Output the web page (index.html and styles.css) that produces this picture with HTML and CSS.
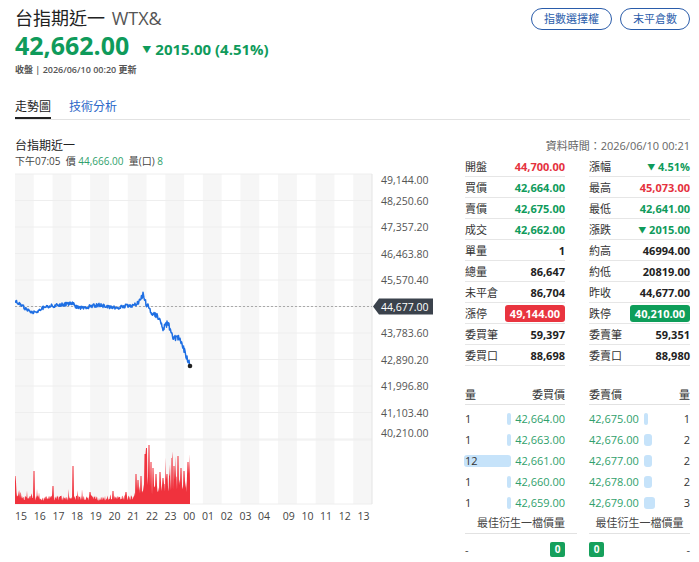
FILE: index.html
```html
<!DOCTYPE html>
<html lang="zh-Hant">
<head>
  <meta charset="UTF-8" />
  <meta name="viewport" content="width=device-width, initial-scale=1" />
  <title>台指期近一 WTX&amp;</title>
  <link rel="stylesheet" href="styles.css">
</head>
<body>
  <div class="page">
    <header class="quote-head">
      <div class="quote-main">
        <h1 class="quote-name">台指期近一 <span class="sym">WTX&amp;</span></h1>
        <div class="price-row">
          <span class="price fall">42,662.00</span>
          <span class="change fall"><span class="arrow">▼</span>2015.00 (4.51%)</span>
        </div>
        <div class="updated">收盤 | 2026/06/10 00:20 更新</div>
      </div>
      <div class="quote-links">
        <a href="#">指數選擇權</a>
        <a href="#">末平倉數</a>
      </div>
    </header>

    <nav class="tabs">
      <a class="tab active" href="#">走勢圖</a>
      <a class="tab" href="#">技術分析</a>
    </nav>

    <section class="board">
      <div class="chart-col">
        <div class="chart-title">台指期近一</div>
        <div class="chart-info">下午07:05 &nbsp;價 <span class="fall-lt">44,666.00</span> &nbsp;量(口) <span class="fall-lt">8</span></div>
        <svg id="chart" class="chart" width="445" height="355" viewBox="15 172 445 355"></svg>
      </div>

      <div class="stats-col">
        <div class="data-time">資料時間：2026/06/10 00:21</div>

        <div class="stats">
          <div class="stat"><span>開盤</span><b class="rise">44,700.00</b></div>
          <div class="stat"><span>漲幅</span><b class="fall"><small>▼</small> 4.51%</b></div>
          <div class="stat"><span>買價</span><b class="fall">42,664.00</b></div>
          <div class="stat"><span>最高</span><b class="rise">45,073.00</b></div>
          <div class="stat"><span>賣價</span><b class="fall">42,675.00</b></div>
          <div class="stat"><span>最低</span><b class="fall">42,641.00</b></div>
          <div class="stat"><span>成交</span><b class="fall">42,662.00</b></div>
          <div class="stat"><span>漲跌</span><b class="fall"><small>▼</small> 2015.00</b></div>
          <div class="stat"><span>單量</span><b>1</b></div>
          <div class="stat"><span>約高</span><b>46994.00</b></div>
          <div class="stat"><span>總量</span><b>86,647</b></div>
          <div class="stat"><span>約低</span><b>20819.00</b></div>
          <div class="stat"><span>未平倉</span><b>86,704</b></div>
          <div class="stat"><span>昨收</span><b>44,677.00</b></div>
          <div class="stat"><span>漲停</span><b class="badge badge-rise">49,144.00</b></div>
          <div class="stat"><span>跌停</span><b class="badge badge-fall">40,210.00</b></div>
          <div class="stat"><span>委買筆</span><b>59,397</b></div>
          <div class="stat"><span>委賣筆</span><b>59,351</b></div>
          <div class="stat"><span>委買口</span><b>88,698</b></div>
          <div class="stat"><span>委賣口</span><b>88,980</b></div>
        </div>

        <div class="book">
          <div class="book-row book-head">
            <div class="side"><span>量</span><span>委買價</span></div>
            <div class="side"><span>委賣價</span><span>量</span></div>
          </div>
          <div class="book-row">
            <div class="bid"><div class="depth"><i class="bar" style="width:3.9px"></i><span>1</span></div><span class="px">42,664.00</span></div>
            <div class="ask"><span class="px">42,675.00</span><div class="depth"><i class="bar" style="width:3.9px"></i><span>1</span></div></div>
          </div>
          <div class="book-row">
            <div class="bid"><div class="depth"><i class="bar" style="width:3.9px"></i><span>1</span></div><span class="px">42,663.00</span></div>
            <div class="ask"><span class="px">42,676.00</span><div class="depth"><i class="bar" style="width:7.8px"></i><span>2</span></div></div>
          </div>
          <div class="book-row">
            <div class="bid"><div class="depth"><i class="bar" style="width:47px"></i><span>12</span></div><span class="px">42,661.00</span></div>
            <div class="ask"><span class="px">42,677.00</span><div class="depth"><i class="bar" style="width:7.8px"></i><span>2</span></div></div>
          </div>
          <div class="book-row">
            <div class="bid"><div class="depth"><i class="bar" style="width:3.9px"></i><span>1</span></div><span class="px">42,660.00</span></div>
            <div class="ask"><span class="px">42,678.00</span><div class="depth"><i class="bar" style="width:7.8px"></i><span>2</span></div></div>
          </div>
          <div class="book-row">
            <div class="bid"><div class="depth"><i class="bar" style="width:3.9px"></i><span>1</span></div><span class="px">42,659.00</span></div>
            <div class="ask"><span class="px">42,679.00</span><div class="depth"><i class="bar" style="width:11.7px"></i><span>3</span></div></div>
          </div>

          <div class="best-label">
            <div>最佳衍生一檔價量</div>
            <div>最佳衍生一檔價量</div>
          </div>
          <div class="book-row best-row">
            <div class="side"><span>-</span><span class="zero">0</span></div>
            <div class="side"><span class="zero">0</span><span>-</span></div>
          </div>
        </div>
      </div>
    </section>
  </div>

  <script src="chart.js"></script>
</body>
</html>
```

FILE: styles.css
```css
body {
  margin: 0;
  font-family: "Open Sans", "Noto Sans CJK TC", sans-serif;
  background: #fff;
  color: #333;
}
a {
  text-decoration: none;
}
.page {
  padding: 7px 9px 0 15px;
}

/* --- QUOTE HEADER --- */
.quote-head {
  display: flex;
  justify-content: space-between;
  align-items: flex-start;
}
.quote-name {
  margin: 0;
  font-size: 18px;
  font-weight: normal;
  line-height: 22px;
  color: #222;
}
.quote-name .sym {
  color: #555;
  margin-left: 2px;
}
.price-row {
  display: flex;
  align-items: baseline;
  gap: 13px;
  line-height: 26px;
  margin-top: 3px;
}
.price {
  font-size: 25px;
  font-weight: 700;
}
.change {
  font-size: 15px;
  font-weight: 700;
}
.change .arrow {
  font-size: 9px;
  vertical-align: 2px;
  margin-right: 4px;
}
.updated {
  font-size: 9px;
  line-height: 14px;
  color: #555;
  font-weight: 600;
}
.quote-links {
  display: flex;
  gap: 8px;
  padding-top: 1px;
}
.quote-links a {
  height: 20px;
  line-height: 20px;
  padding: 0 12px;
  border: 1px solid #2a5caa;
  border-radius: 12px;
  font-size: 11px;
  color: #2a5caa;
}

/* --- TABS --- */
.tabs {
  display: flex;
  gap: 18px;
  margin-top: 21px;
  border-bottom: 1px solid #e2e2e2;
}
.tab {
  font-size: 12px;
  line-height: 18px;
  padding-bottom: 1px;
  border-bottom: 2px solid transparent;
  color: #2a66c8;
}
.tab.active {
  color: #222;
  border-bottom-color: #222;
}

/* --- BOARD --- */
.board {
  display: flex;
  gap: 5px;
  margin-top: 19px;
}
.chart-col {
  width: 445px;
  display: flex;
  flex-direction: column;
}
.chart-title {
  font-size: 12px;
  line-height: 14px;
  color: #222;
}
.chart-info {
  font-size: 10px;
  line-height: 12px;
  margin-top: 2px;
  color: #444;
}
.chart {
  display: block;
  margin-top: 3px;
}
.fall-lt {
  color: #2f9f6c;
}

/* chart svg parts */
.stripe { fill: #f6f6f6; }
.grid { stroke: #eeeeee; stroke-width: 1; }
.axis { stroke: #e4e4e4; stroke-width: 1; }
.ref-line { stroke: #a9a9a9; stroke-width: 1; stroke-dasharray: 2 2; }
.price-line { fill: none; stroke: #1f6fe3; stroke-width: 1.5; stroke-linejoin: round; }
.last-dot { fill: #222; }
.volume { fill: #f0323d; }
.axis-label { font-size: 10.5px; fill: #555; }
.x-label { font-size: 10.5px; fill: #444; }
.ref-badge { fill: #3b424c; }
.ref-text { font-size: 10.5px; fill: #fff; }

/* --- STATS --- */
.stats-col {
  width: 225px;
}
.data-time {
  font-size: 11px;
  line-height: 14px;
  color: #666;
  text-align: right;
}
.stats {
  display: grid;
  grid-template-columns: 100px 1fr;
  column-gap: 24px;
  margin-top: 3px;
}
.stat {
  display: flex;
  justify-content: space-between;
  align-items: center;
  height: 20px;
  border-bottom: 1px solid #e6e6e6;
  font-size: 11px;
}
.stat span {
  color: #333;
}
.stat b {
  font-weight: 700;
  color: #222;
}
.stat small {
  font-size: 8px;
  vertical-align: 1px;
}
.rise { color: #e5323e !important; }
.fall { color: #0f9b5b !important; }
.badge {
  height: 17px;
  line-height: 17px;
  width: 60px;
  text-align: center;
  border-radius: 3px;
  color: #fff !important;
}
.badge-rise { background: #e9343f; }
.badge-fall { background: #0e9e5a; }

/* --- ORDER BOOK --- */
.book {
  margin-top: 18px;
  font-size: 11px;
}
.book-row {
  display: grid;
  grid-template-columns: 100px 1fr;
  column-gap: 24px;
  height: 21px;
  align-items: center;
}
.book-head {
  height: 20px;
  margin-bottom: 4px;
}
.side {
  display: flex;
  justify-content: space-between;
  align-items: center;
}
.book-head .side {
  height: 20px;
  border-bottom: 1px solid #e2e2e2;
  color: #333;
}
.bid, .ask {
  display: flex;
  align-items: center;
}
.depth {
  position: relative;
  flex: 1;
  height: 12px;
  line-height: 12px;
  color: #333;
}
.bid .depth { margin-right: 4px; }
.ask .depth { margin-left: 5px; text-align: right; }
.depth .bar {
  position: absolute;
  top: 0;
  height: 12px;
  border-radius: 3px;
  background: #c6e3fa;
}
.bid .bar { right: 0; }
.ask .bar { left: 0; }
.depth span {
  position: relative;
}
.px {
  color: #2f9f6c;
}
.best-label {
  display: grid;
  grid-template-columns: 112px 1fr;
  column-gap: 12px;
}
.best-label div {
  text-align: center;
  line-height: 20px;
  border-bottom: 1px solid #e2e2e2;
  color: #444;
}
.best-row {
  height: 24px;
  margin-top: 3px;
  color: #444;
}
.zero {
  width: 15px;
  height: 15px;
  line-height: 15px;
  text-align: center;
  border-radius: 2px;
  background: #16a05c;
  color: #fff;
  font-weight: 700;
  font-size: 10px;
}
```

FILE: chart.js
```js
(function () {
  const svg = document.getElementById('chart');
  const NS = 'http://www.w3.org/2000/svg';

  function add(tag, attrs, text) {
    const el = document.createElementNS(NS, tag);
    for (const k in attrs) el.setAttribute(k, attrs[k]);
    if (text) el.textContent = text;
    svg.appendChild(el);
    return el;
  }

  // small seeded random so the picture is the same each load
  let seed = 20260610;
  function rnd() {
    seed |= 0; seed = seed + 0x6D2B79F5 | 0;
    let t = Math.imul(seed ^ seed >>> 15, 1 | seed);
    t = t + Math.imul(t ^ t >>> 7, 61 | t) ^ t;
    return ((t ^ t >>> 14) >>> 0) / 4294967296;
  }

  function interp(points, x) {
    for (let i = 1; i < points.length; i++) {
      const [x0, y0] = points[i - 1];
      const [x1, y1] = points[i];
      if (x <= x1) return y0 + (y1 - y0) * (x - x0) / (x1 - x0);
    }
    return points[points.length - 1][1];
  }

  const left = 15, right = 372;
  const colW = (right - left) / 19;
  const chartTop = 176, step = 26.5;
  const volTop = 442, volBottom = 506;

  // hour stripes
  for (let i = 0; i < 19; i += 2) {
    add('rect', { x: left + i * colW, y: chartTop, width: colW, height: volBottom - chartTop, class: 'stripe' });
  }

  // price grid + labels
  const levels = ['49,144.00', '48,250.60', '47,357.20', '46,463.80', '45,570.40', '44,677.00',
    '43,783.60', '42,890.20', '41,996.80', '41,103.40', '40,210.00'];
  levels.forEach((lv, i) => {
    const y = chartTop + i * step;
    add('line', { x1: left, x2: right, y1: y, y2: y, class: 'grid' });
    if (i === 5) return;
    const ly = Math.min(Math.max(y, 182), 435);
    add('text', { x: 381, y: ly + 4, class: 'axis-label' }, lv);
  });
  add('line', { x1: left, x2: right, y1: volTop, y2: volTop, class: 'grid' });
  add('line', { x1: left, x2: right, y1: volBottom, y2: volBottom, class: 'grid' });
  add('line', { x1: right, x2: right, y1: chartTop, y2: volBottom, class: 'axis' });

  // previous close reference
  const refY = chartTop + 5 * step;
  add('line', { x1: left, x2: right, y1: refY, y2: refY, class: 'ref-line' });

  // volume
  const spikes = [[15, 28], [15.5, 22], [34, 33], [53, 18], [73, 38], [90, 12], [113, 13], [126, 12],
    [136, 30], [138, 24], [141, 28], [145, 50], [146.5, 56], [149, 59], [151, 42], [153, 36], [156, 30],
    [160, 32], [163, 26], [167, 30], [172, 46], [174, 38], [178, 48], [181, 36], [184, 33], [188, 42]];
  let vol = `M${left},${volBottom}`;
  for (let x = left; x <= 190; x += 0.5) {
    const base = x < 136 ? 6 + (x < 24 ? (24 - x) * 0.8 : 0) : 15 + (x > 165 ? 6 : 0);
    let h = base * (0.55 + rnd() * 0.9);
    if (rnd() < 0.08) h += base * rnd() * 1.6;
    spikes.forEach(([sx, sh]) => { if (Math.abs(x - sx) < 0.6) h = Math.max(h, sh); });
    vol += ` L${x},${(volBottom - h).toFixed(1)}`;
  }
  vol += ` L190,${volBottom} Z`;
  add('path', { d: vol, class: 'volume' });

  // price line
  const anchors = [[15, 303], [20, 306], [26, 311], [31, 313], [35, 315], [40, 311], [50, 308], [60, 307],
    [72, 305], [76, 309], [83, 310], [92, 308], [100, 307], [108, 309], [117, 310], [125, 308], [133, 308],
    [138, 305], [141, 301], [143, 297], [146, 305], [150, 312], [154, 316], [157, 318], [160, 322],
    [163, 330], [166, 327], [168, 325], [171, 333], [173, 343], [176, 339], [180, 340], [183, 348],
    [185, 355], [188, 362], [190, 368]];
  let d = '';
  for (let x = left; x <= 190; x += 0.5) {
    const amp = x < 140 ? 3.6 : 6;
    let y = interp(anchors, x) + (rnd() - 0.5) * amp;
    if (x >= 190) y = 368;
    d += (d ? ' L' : 'M') + x + ',' + y.toFixed(1);
  }
  add('path', { d, class: 'price-line' });
  add('circle', { cx: 190, cy: 368, r: 2.3, class: 'last-dot' });

  // reference badge on the axis
  add('path', { d: `M373,${refY} L379,${refY - 8} H433 V${refY + 8} H379 Z`, class: 'ref-badge' });
  add('text', { x: 381, y: refY + 4, class: 'ref-text' }, '44,677.00');

  // hour labels
  const hours = ['15', '16', '17', '18', '19', '20', '21', '22', '23', '00', '01', '02', '03', '04',
    '09', '10', '11', '12', '13'];
  hours.forEach((h, i) => {
    const x = i < 14 ? 15 + i * 18.7 : 282.7 + (i - 14) * 18.7;
    add('text', { x, y: 522, class: 'x-label' }, h);
  });
})();
```
